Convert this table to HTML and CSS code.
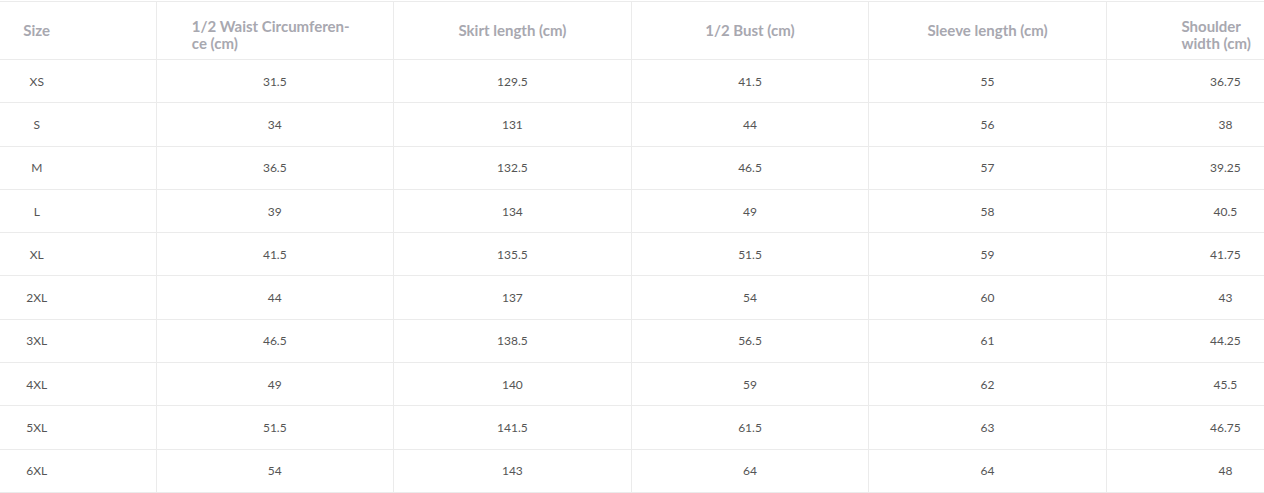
FILE: index.html
```html
<!DOCTYPE html>
<html>
<head>
<meta charset="utf-8">
<link rel="stylesheet" href="styles.css">
</head>
<body>
<div class="wrap">
<table class="size-table">
<colgroup>
<col class="c-size"><col class="c-m"><col class="c-m"><col class="c-m"><col class="c-m"><col class="c-m">
</colgroup>
<thead>
<tr>
<th class="first">Size</th>
<th><span class="hbox waist">1/2 Waist Circumferen-<br>ce (cm)</span></th>
<th>Skirt length (cm)</th>
<th>1/2 Bust (cm)</th>
<th>Sleeve length (cm)</th>
<th><span class="hbox shoulder">Shoulder<br>width (cm)</span></th>
</tr>
</thead>
<tbody>
<tr><td class="first">XS</td><td>31.5</td><td>129.5</td><td>41.5</td><td>55</td><td>36.75</td></tr>
<tr><td class="first">S</td><td>34</td><td>131</td><td>44</td><td>56</td><td>38</td></tr>
<tr><td class="first">M</td><td>36.5</td><td>132.5</td><td>46.5</td><td>57</td><td>39.25</td></tr>
<tr><td class="first">L</td><td>39</td><td>134</td><td>49</td><td>58</td><td>40.5</td></tr>
<tr><td class="first">XL</td><td>41.5</td><td>135.5</td><td>51.5</td><td>59</td><td>41.75</td></tr>
<tr><td class="first">2XL</td><td>44</td><td>137</td><td>54</td><td>60</td><td>43</td></tr>
<tr><td class="first">3XL</td><td>46.5</td><td>138.5</td><td>56.5</td><td>61</td><td>44.25</td></tr>
<tr><td class="first">4XL</td><td>49</td><td>140</td><td>59</td><td>62</td><td>45.5</td></tr>
<tr><td class="first">5XL</td><td>51.5</td><td>141.5</td><td>61.5</td><td>63</td><td>46.75</td></tr>
<tr><td class="first">6XL</td><td>54</td><td>143</td><td>64</td><td>64</td><td>48</td></tr>
</tbody>
</table>
</div>
</body>
</html>
```
FILE: styles.css
```css
html, body {
  margin: 0;
  padding: 0;
  background: #ffffff;
}
body {
  font-family: Lato, "Open Sans", Arial, sans-serif;
  overflow: hidden;
}
.wrap {
  width: 1264px;
  overflow: hidden;
  padding-top: 1px;
}
.size-table {
  width: 1344px;
  table-layout: fixed;
  border-collapse: collapse;
}
.c-size { width: 156px; }
.c-m { width: 237.6px; }
.size-table th,
.size-table td {
  border-top: 1px solid #ebebeb;
  border-bottom: 1px solid #ebebeb;
  border-left: 1px solid #ebebeb;
  text-align: center;
  padding: 0;
}
.size-table th.first,
.size-table td.first {
  border-left: none;
  padding-right: 82px;
}
.size-table th {
  height: 57px;
  font-size: 15px;
  font-weight: 700;
  line-height: 17px;
  color: #a8a8b0;
}
.size-table td {
  height: 42.3px;
  font-size: 12px;
  color: #555555;
}
.hbox {
  display: inline-block;
  text-align: left;
  vertical-align: middle;
  white-space: nowrap;
  margin-top: 8px;
}
.hbox.waist { width: 166px; }
.hbox.shoulder { width: 88px; }
```
